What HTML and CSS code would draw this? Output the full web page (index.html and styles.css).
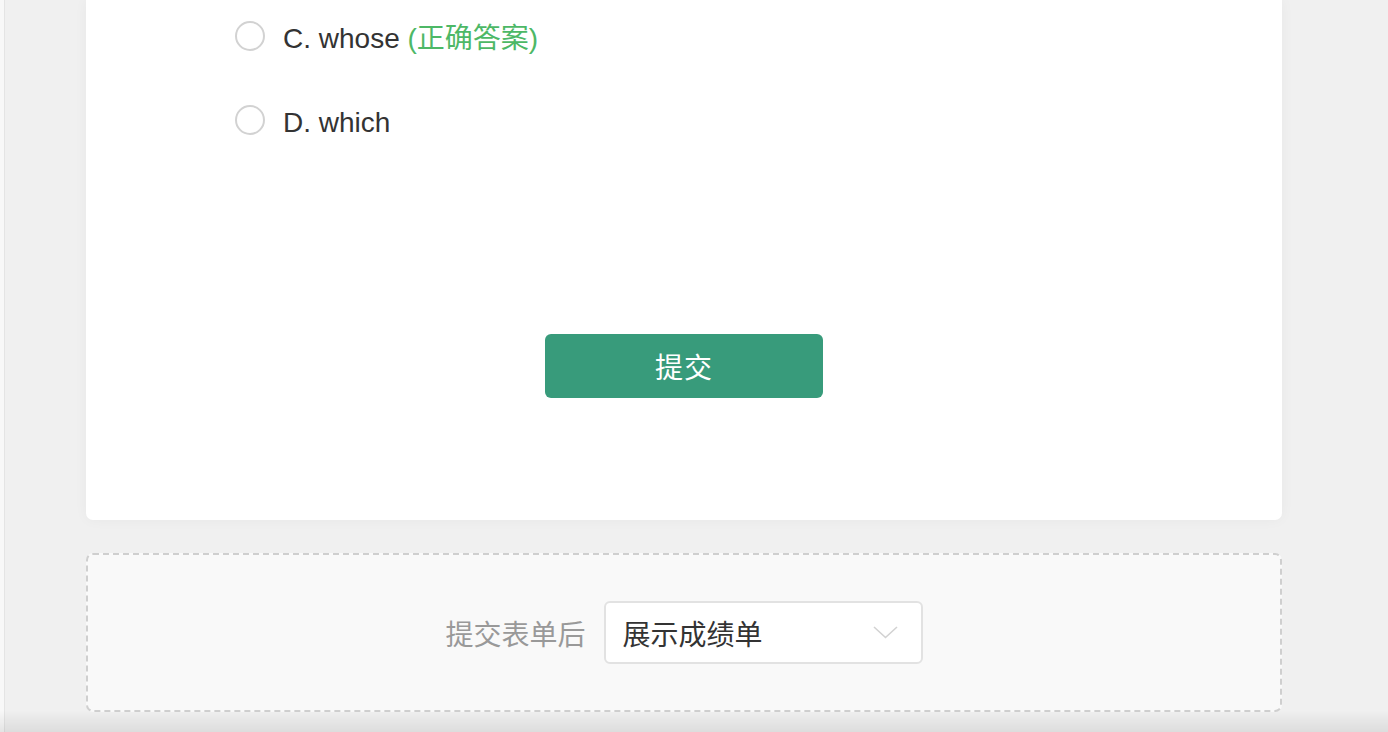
FILE: index.html
```html
<!DOCTYPE html>
<html lang="zh-CN">
<head>
<meta charset="utf-8">
<title>表单</title>
<link rel="stylesheet" href="styles.css">
</head>
<body>
<div class="page">
  <div class="main">
    <section class="card">
      <div class="options">
        <label class="option">
          <span class="radio"></span>
          <span class="option-text">C. whose <span class="correct">(正确答案)</span></span>
        </label>
        <label class="option">
          <span class="radio"></span>
          <span class="option-text">D. which</span>
        </label>
      </div>
      <div class="actions">
        <button class="submit">提交</button>
      </div>
    </section>
    <section class="after-card">
      <span class="after-label">提交表单后</span>
      <div class="select">
        <span class="select-value">展示成绩单</span>
        <svg class="chevron" width="25" height="13" viewBox="0 0 25 13"><path d="M1 1 L12.5 11.5 L24 1" fill="none" stroke="#d2d2d2" stroke-width="1.6"/></svg>
      </div>
    </section>
  </div>
</div>
<div class="bottom-shade"></div>
</body>
</html>
```

FILE: styles.css
```css
* { box-sizing: border-box; }
html, body { margin: 0; padding: 0; }
body {
  background: #f0f0f0;
  font-family: "Liberation Sans", "Noto Sans CJK SC", sans-serif;
  color: #333;
  height: 732px;
  overflow: hidden;
}
.page {
  display: flex;
  height: 100%;
  border-left: 4px solid #f8f8f8;
}
.main {
  flex: 1;
  border-left: 1px solid #e4e4e4;
  padding-left: 81px;
  padding-right: 106px;
}
.card {
  background: #fff;
  border-radius: 0 0 7px 7px;
  box-shadow: 0 0 14px rgba(0, 0, 0, 0.04);
  padding: 21px 0 122px 149px;
}
.options {
  display: flex;
  flex-direction: column;
  gap: 54px;
}
.option {
  display: flex;
  align-items: center;
  gap: 18px;
  height: 30px;
}
.radio {
  width: 30px;
  height: 30px;
  border-radius: 50%;
  border: 2px solid #d2d2d2;
  background: #fff;
  flex: none;
}
.option-text {
  font-size: 28px;
  color: #333;
  line-height: 30px;
  padding-top: 5px;
}
.correct {
  color: #4db866;
}
.actions {
  display: flex;
  justify-content: center;
  padding-right: 149px;
  margin-top: 199px;
}
.submit {
  width: 278px;
  height: 64px;
  border: none;
  border-radius: 6px;
  background: #389b7b;
  color: #fff;
  font-family: inherit;
  font-size: 28px;
  letter-spacing: 1px;
}
.after-card {
  margin-top: 33px;
  height: 159px;
  border: 2px dashed #cfcfcf;
  border-radius: 7px;
  background: #f9f9f9;
  display: flex;
  align-items: center;
  justify-content: center;
  gap: 18px;
}
.after-label {
  font-size: 28px;
  color: #999;
}
.select {
  width: 319px;
  height: 63px;
  background: #fff;
  border: 2px solid #e2e2e2;
  border-radius: 6px;
  display: flex;
  align-items: center;
  justify-content: space-between;
  padding: 0 23px 0 17px;
}
.select-value {
  font-size: 28px;
  color: #333;
}
.bottom-shade {
  position: fixed;
  left: 0;
  right: 0;
  bottom: 0;
  height: 22px;
  background: linear-gradient(rgba(0, 0, 0, 0), rgba(0, 0, 0, 0.08));
  pointer-events: none;
}
```
